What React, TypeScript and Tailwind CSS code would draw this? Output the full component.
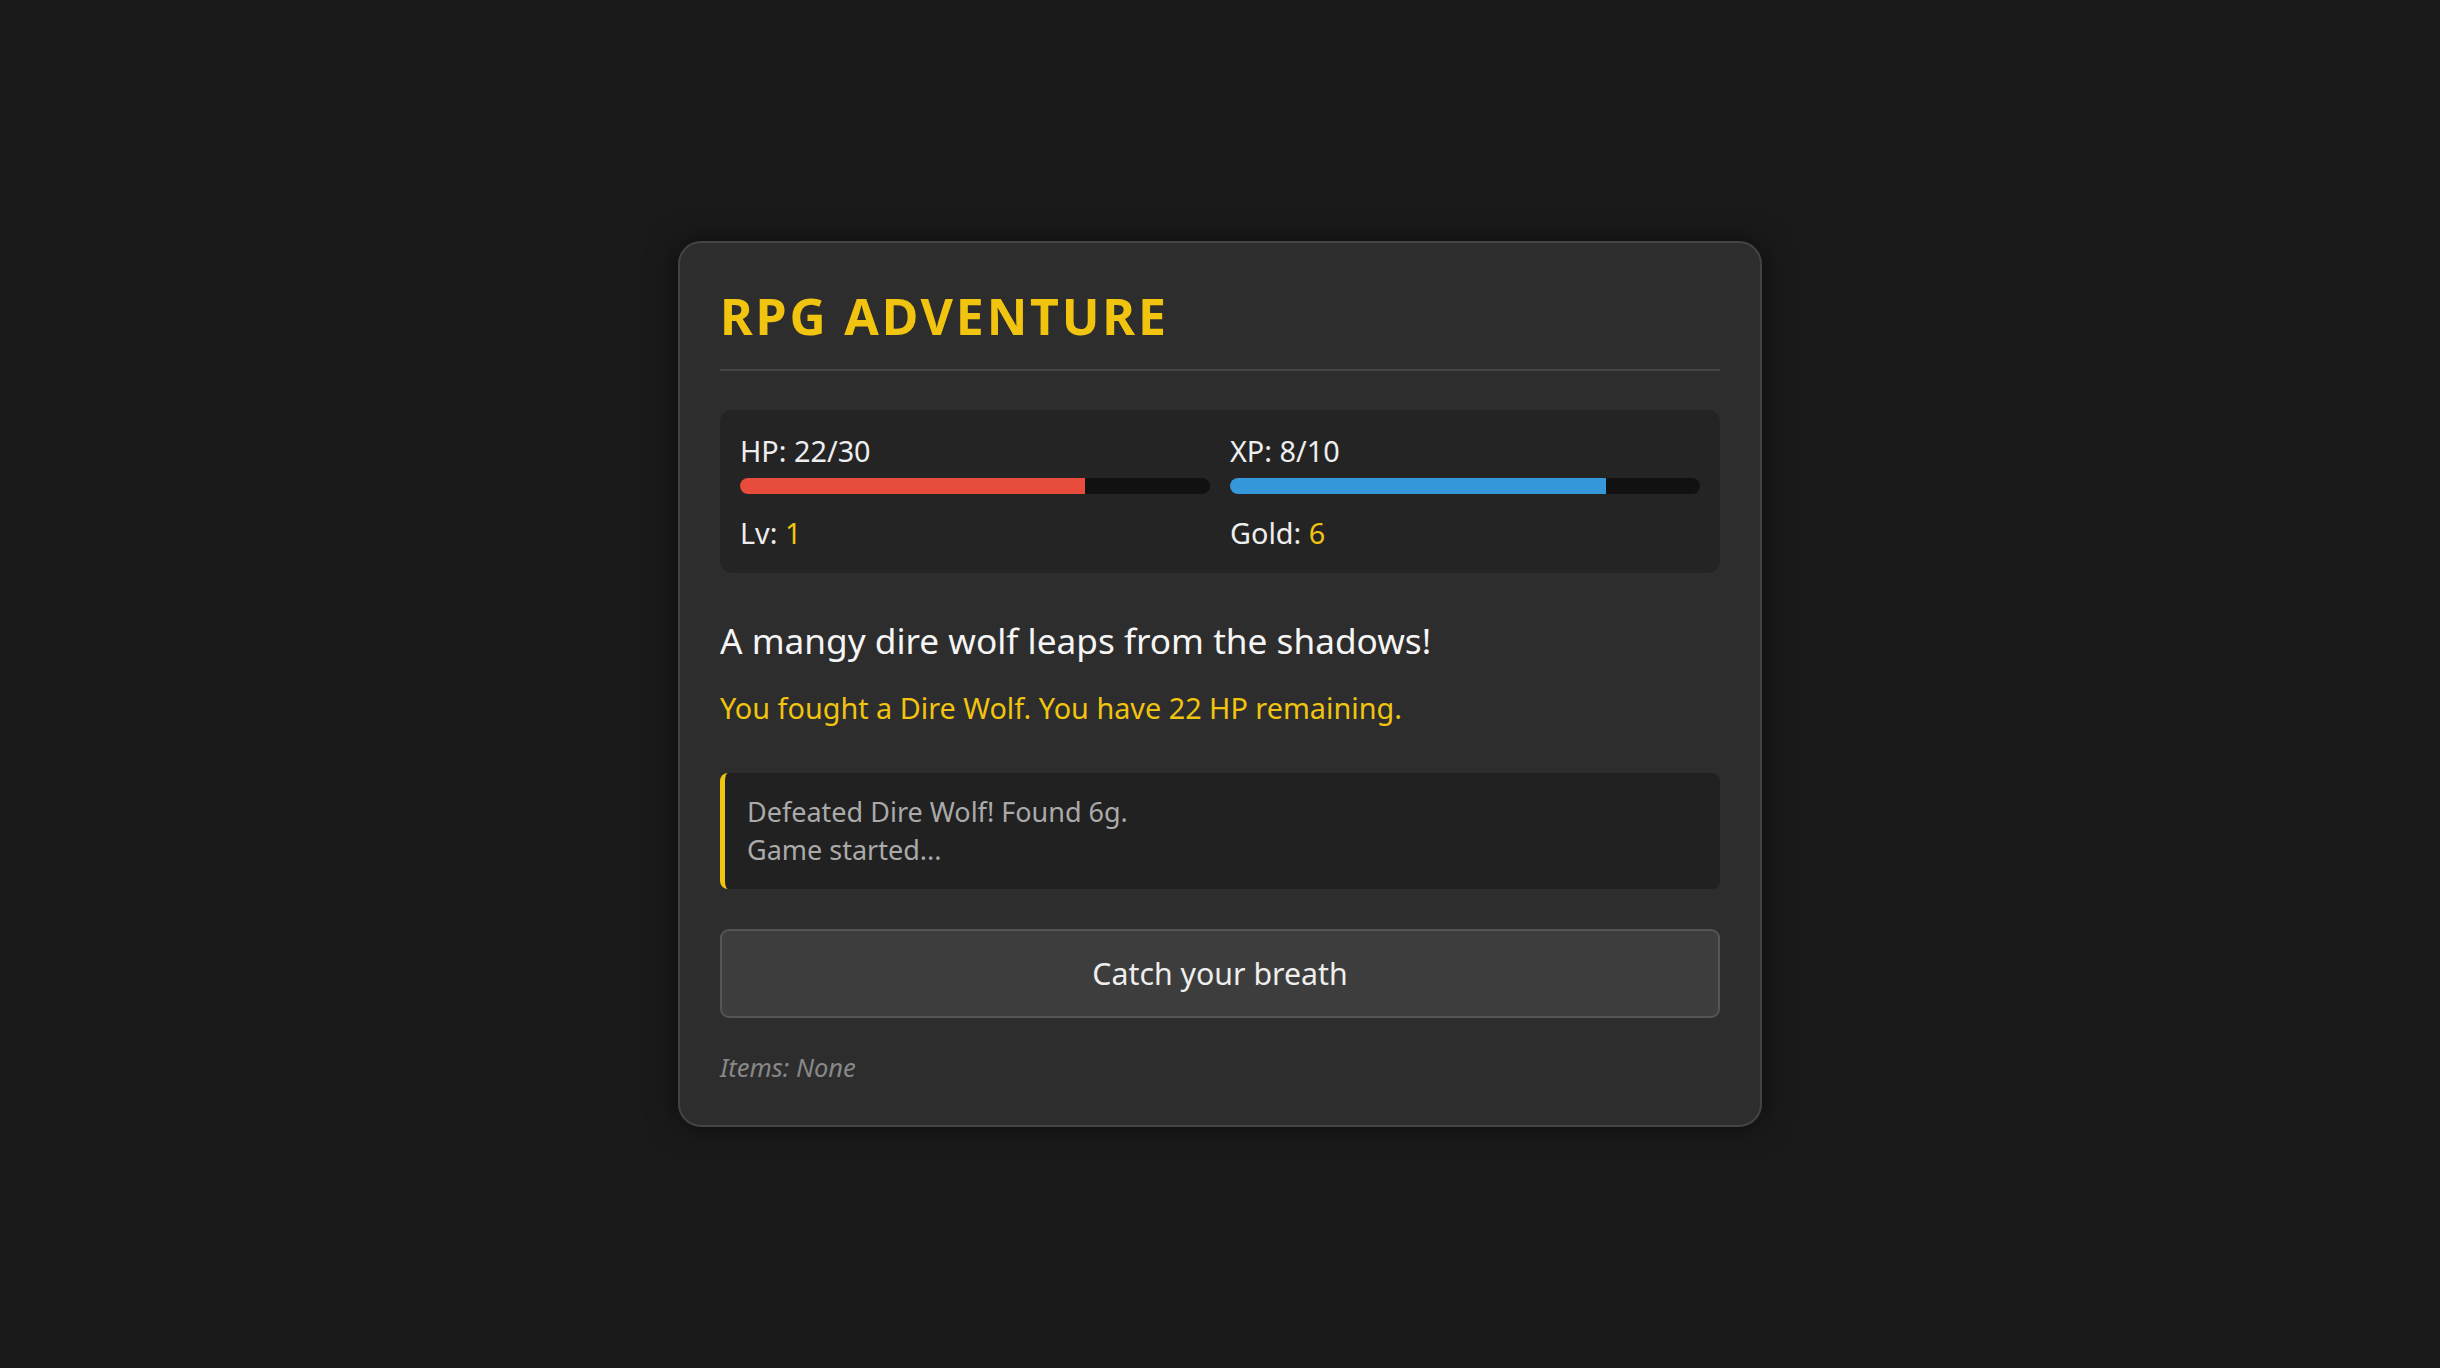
import React from "react";

export default function App() {
  const hp = 22, maxHp = 30, xp = 8, maxXp = 10;
  return (
    <div
      className="min-h-screen w-full bg-[#1a1a1a] flex items-center justify-center"
      style={{ fontFamily: '"Noto Sans", "Open Sans", sans-serif' }}
    >
      <div className="w-[1084px] bg-[#2d2d2d] border-2 border-[#444] rounded-[23px] px-[40px] pt-[42px] pb-[40px] shadow-[0_0_31px_rgba(0,0,0,0.55)] text-[#eee]">
        <div className="pb-[22px] border-b-2 border-[#444] mb-[39px]">
          <h1 className="text-[50px] leading-[62px] font-bold tracking-[2.8px] text-[#f1c40f] m-0">
            RPG ADVENTURE
          </h1>
        </div>

        <div className="bg-[#242424] rounded-[12px] p-[20px] grid grid-cols-2 gap-x-[20px] gap-y-[18px] text-[28.8px] leading-[41px]">
          <div>
            <div>HP: {hp}/{maxHp}</div>
            <div className="mt-[7px] h-[16px] rounded-[8px] bg-[#111] overflow-hidden">
              <div className="h-full bg-[#e74c3c]" style={{ width: `${(hp / maxHp) * 100}%` }} />
            </div>
          </div>
          <div>
            <div>XP: {xp}/{maxXp}</div>
            <div className="mt-[7px] h-[16px] rounded-[8px] bg-[#111] overflow-hidden">
              <div className="h-full bg-[#3498db]" style={{ width: `${(xp / maxXp) * 100}%` }} />
            </div>
          </div>
          <div>
            Lv: <span className="text-[#f1c40f]">1</span>
          </div>
          <div>
            Gold: <span className="text-[#f1c40f]">6</span>
          </div>
        </div>

        <p className="mt-[41px] text-[35.2px] leading-[52px] text-[#f5f5f5]">
          A mangy dire wolf leaps from the shadows!
        </p>
        <p className="mt-[19px] text-[28.8px] leading-[45px] text-[#f1c40f]">
          You fought a Dire Wolf. You have 22 HP remaining.
        </p>

        <div className="mt-[43px] bg-[#212121] border-l-[5px] border-[#f1c40f] rounded-[8px] pl-[22px] pr-[20px] py-[20px] text-[27px] leading-[38.4px] text-[#aaa]">
          <div>Defeated Dire Wolf! Found 6g.</div>
          <div>Game started...</div>
        </div>

        <button className="mt-[40px] w-full bg-[#3d3d3d] border-2 border-[#555] rounded-[9px] py-[19px] text-[30.3px] leading-[47px] text-[#eee] cursor-pointer">
          Catch your breath
        </button>

        <div className="mt-[31px] text-[25.5px] leading-[36px] italic text-[#888]">
          Items: None
        </div>
      </div>
    </div>
  );
}
